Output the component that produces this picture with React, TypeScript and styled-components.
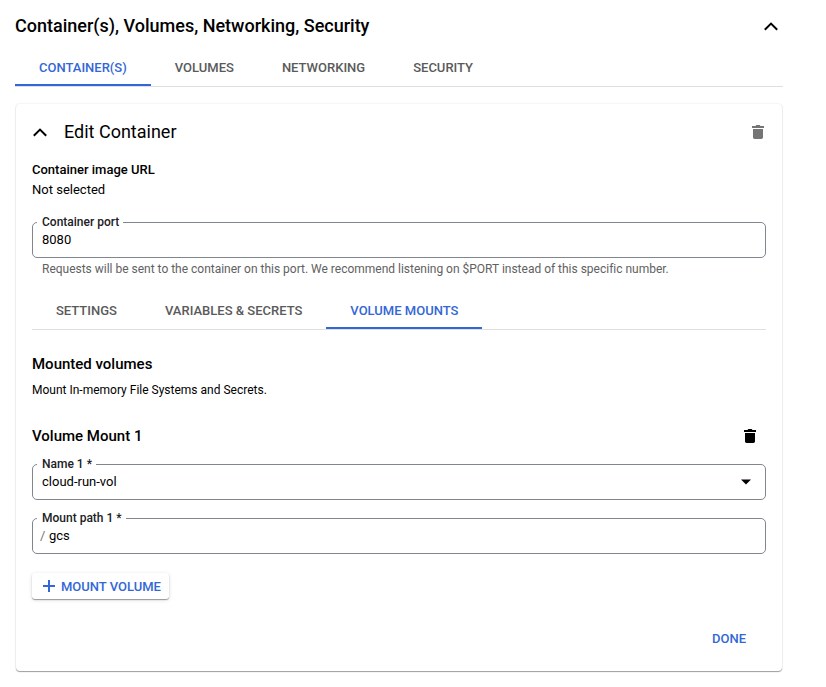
import React from "react";
import styled, { createGlobalStyle } from "styled-components";

const BLUE = "#3367d6";

const GlobalStyle = createGlobalStyle`
  * { box-sizing: border-box; }
  body {
    margin: 0;
    background: #fff;
    color: #000;
    font-family: Roboto, "Liberation Sans", sans-serif;
    font-size: 13px;
  }
  button { font-family: inherit; cursor: pointer; }
`;

const Page = styled.main`
  width: 826px;
  height: 687px;
  padding: 0 43px 0 15px;
  display: flex;
  flex-direction: column;
  overflow: hidden;
`;

const SectionHeader = styled.header`
  height: 52px;
  display: flex;
  align-items: center;
  justify-content: space-between;
`;

const SectionTitle = styled.h2`
  margin: 0;
  font-size: 18px;
  line-height: 24px;
  font-weight: 500;
`;

const IconButton = styled.button<{ $color?: string }>`
  width: 24px;
  height: 24px;
  padding: 0;
  border: 0;
  background: none;
  display: flex;
  align-items: center;
  justify-content: center;
  color: ${(p) => p.$color ?? "#000"};
`;

const TabBar = styled.nav<{ $height: number; $top?: number }>`
  height: ${(p) => p.$height}px;
  margin-top: ${(p) => p.$top ?? 0}px;
  flex: none;
  display: flex;
  border-bottom: 1px solid #dfdfdf;
`;

const Tab = styled.button<{ $active?: boolean }>`
  padding: 0 24px;
  border: 0;
  border-bottom: 2px solid ${(p) => (p.$active ? BLUE : "transparent")};
  background: none;
  color: ${(p) => (p.$active ? BLUE : "#5a5a5a")};
  font-size: 13px;
  line-height: 20px;
  font-weight: 500;
  white-space: nowrap;
`;

const Card = styled.section`
  height: 567px;
  margin: 17px 0 0 1px;
  width: 766px;
  padding: 0 16px;
  border-radius: 4px;
  display: flex;
  flex-direction: column;
  box-shadow: 0 1px 1px rgba(0, 0, 0, 0.36), 0 0 2px rgba(0, 0, 0, 0.14);
`;

const CardHeader = styled.div`
  height: 56px;
  margin: 0 -4px;
  display: flex;
  align-items: center;
`;

const CardTitle = styled.h3`
  flex: 1;
  margin: 0 0 0 12px;
  font-size: 18px;
  line-height: 24px;
  font-weight: 400;
`;

const Caption = styled.div`
  line-height: 20px;
  font-weight: 500;
`;

const Value = styled.div`
  line-height: 20px;
`;

const Field = styled.div<{ $top: number }>`
  position: relative;
  height: 36px;
  flex: none;
  margin-top: ${(p) => p.$top}px;
  padding: 0 7px 0 9px;
  border: 1px solid #80868b;
  border-radius: 5px;
  display: flex;
  align-items: center;
  justify-content: space-between;
`;

const FieldLabel = styled.label`
  position: absolute;
  left: 4px;
  top: -9px;
  padding: 0 4px 0 5px;
  background: #fff;
  color: #202124;
  font-size: 12px;
  line-height: 16px;
  font-weight: 500;
`;

const FieldText = styled.span`
  line-height: 20px;
`;

const Prefix = styled.span`
  margin: 0 3.5px 0 -2px;
  color: #757575;
`;

const Hint = styled.div`
  margin: 3px 0 0 10px;
  font-size: 12px;
  line-height: 16px;
  letter-spacing: -0.008px;
  color: #616161;
`;

const Heading = styled.h4`
  margin: 0;
  font-size: 15px;
  line-height: 24px;
  font-weight: 500;
`;

const Description = styled.p`
  margin: 6px 0 0;
  font-size: 12px;
  line-height: 16px;
`;

const Panel = styled.div`
  padding-top: 22px;
  display: flex;
  flex-direction: column;
`;

const MountRow = styled.div`
  margin-top: 26px;
  padding-right: 4px;
  display: flex;
  justify-content: space-between;
  align-items: center;
`;

const RaisedButton = styled.button`
  align-self: flex-start;
  width: 137px;
  height: 26px;
  margin-top: 19px;
  padding: 0 0 0 9px;
  border: 0;
  border-radius: 3px;
  background: #fff;
  color: ${BLUE};
  box-shadow: 0 1px 1px rgba(0, 0, 0, 0.36), 0 1px 4px rgba(0, 0, 0, 0.13);
  display: flex;
  align-items: center;
  gap: 4px;
  font-size: 13px;
  font-weight: 500;
  white-space: nowrap;
`;

const CardFooter = styled.div`
  height: 36px;
  margin-top: 21px;
  display: flex;
  justify-content: flex-end;
  align-items: center;
`;

const TextButton = styled.button`
  padding: 0 20px;
  border: 0;
  background: none;
  color: ${BLUE};
  font-size: 13px;
  font-weight: 500;
`;

const ChevronUp = () => (
  <svg width="24" height="24" viewBox="0 0 24 24">
    <path d="M5.800 15.700 12 9.600l6.200 6.100" fill="none" stroke="currentColor" strokeWidth="2" />
  </svg>
);

const Trash = () => (
  <svg width="18" height="18" viewBox="0 0 18 18" fill="currentColor">
    <path d="M4 6h10v8.300c0 1-.7 1.700-1.700 1.700H5.700C4.700 16 4 15.300 4 14.300zM3 3h3.500l.8-1h3.400l.8 1H15v2H3z" />
  </svg>
);

const Plus = () => (
  <svg width="16" height="16" viewBox="0 0 16 16">
    <path d="M8 2v12M2 8h12" fill="none" stroke="currentColor" strokeWidth="2" />
  </svg>
);

const Caret = () => (
  <svg width="24" height="24" viewBox="0 0 24 24">
    <path d="M7 9.500h10l-5 5z" fill="currentColor" />
  </svg>
);

export default function App() {
  return (
    <>
      <GlobalStyle />
      <Page>
        <SectionHeader>
          <SectionTitle>Container(s), Volumes, Networking, Security</SectionTitle>
          <IconButton aria-label="Collapse section"><ChevronUp /></IconButton>
        </SectionHeader>
        <TabBar $height={35}>
          <Tab $active>CONTAINER(S)</Tab>
          <Tab>VOLUMES</Tab>
          <Tab>NETWORKING</Tab>
          <Tab>SECURITY</Tab>
        </TabBar>
        <Card>
          <CardHeader>
            <IconButton aria-label="Collapse container"><ChevronUp /></IconButton>
            <CardTitle>Edit Container</CardTitle>
            <IconButton $color="#757575" aria-label="Delete container"><Trash /></IconButton>
          </CardHeader>
          <Caption>Container image URL</Caption>
          <Value>Not selected</Value>
          <Field $top={22}>
            <FieldLabel>Container port</FieldLabel>
            <FieldText>8080</FieldText>
          </Field>
          <Hint>
            Requests will be sent to the container on this port. We recommend listening on $PORT instead of this specific number.
          </Hint>
          <TabBar $height={35} $top={18}>
            <Tab>SETTINGS</Tab>
            <Tab>VARIABLES &amp; SECRETS</Tab>
            <Tab $active>VOLUME MOUNTS</Tab>
          </TabBar>
          <Panel>
            <Heading>Mounted volumes</Heading>
            <Description>Mount In-memory File Systems and Secrets.</Description>
            <MountRow>
              <Heading>Volume Mount 1</Heading>
              <IconButton aria-label="Delete volume mount"><Trash /></IconButton>
            </MountRow>
            <Field $top={16}>
              <FieldLabel>Name 1 *</FieldLabel>
              <FieldText>cloud-run-vol</FieldText>
              <Caret />
            </Field>
            <Field $top={18}>
              <FieldLabel>Mount path 1 *</FieldLabel>
              <FieldText><Prefix>/</Prefix>gcs</FieldText>
            </Field>
            <RaisedButton><Plus />MOUNT VOLUME</RaisedButton>
          </Panel>
          <CardFooter><TextButton>DONE</TextButton></CardFooter>
        </Card>
      </Page>
    </>
  );
}
